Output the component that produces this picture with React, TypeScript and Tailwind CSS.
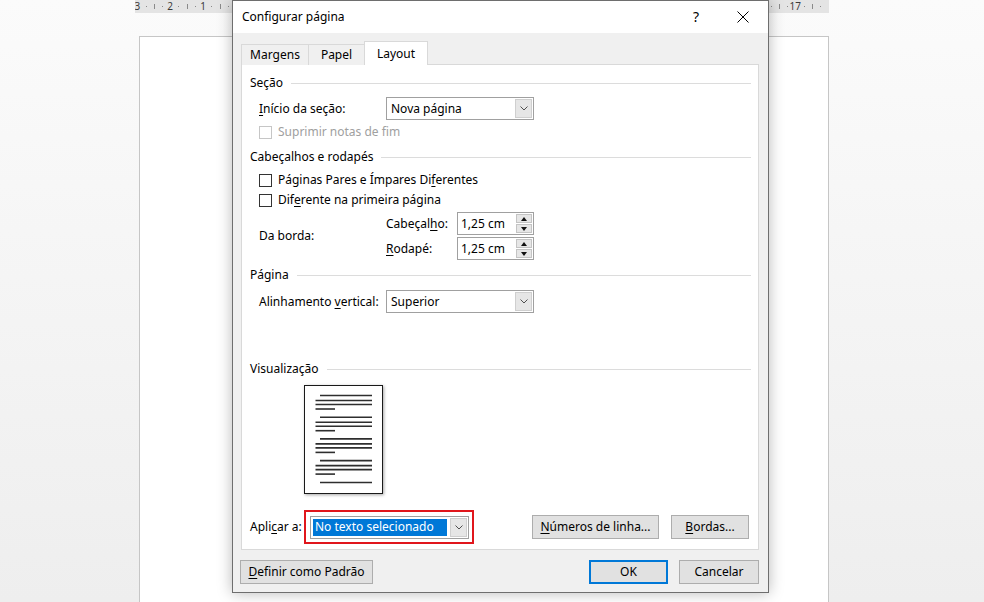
import React from "react";

const U = ({ children }: { children: React.ReactNode }) => (
  <span className="underline decoration-1 underline-offset-[2px]">{children}</span>
);

function Chevron() {
  return (
    <svg width="8" height="5" viewBox="0 0 8 5">
      <path d="M0.5 0.5 L4 4 L7.5 0.5" fill="none" stroke="#505050" strokeWidth="1" />
    </svg>
  );
}

function SelectBox({ children, className }: { children: React.ReactNode; className: string }) {
  return (
    <div className={`flex h-[23px] items-stretch border border-[#a0a0a0] bg-white ${className}`}>
      <div className="flex flex-1 items-center overflow-hidden">{children}</div>
      <div className="m-px flex w-[17px] items-center justify-center border border-[#cfcfcf] bg-[#e6e6e6]">
        <Chevron />
      </div>
    </div>
  );
}

function Spinner({ value }: { value: string }) {
  return (
    <div className="flex h-[23px] w-[77px] items-stretch border border-[#a0a0a0] bg-white">
      <div className="flex flex-1 items-center pl-[3px]">{value}</div>
      <div className="my-px mr-px flex w-[16px] flex-col gap-px">
        <div className="flex flex-1 items-center justify-center border border-[#c4c4c4] bg-[#e6e6e6]">
          <svg width="6" height="4" viewBox="0 0 6 4">
            <path d="M0 4 L3 0 L6 4 Z" fill="#111" />
          </svg>
        </div>
        <div className="flex flex-1 items-center justify-center border border-[#c4c4c4] bg-[#e6e6e6]">
          <svg width="6" height="4" viewBox="0 0 6 4">
            <path d="M0 0 L3 4 L6 0 Z" fill="#111" />
          </svg>
        </div>
      </div>
    </div>
  );
}

function Header({ label, className = "" }: { label: string; className?: string }) {
  return (
    <div className={`flex h-[16px] items-center ${className}`}>
      <span>{label}</span>
      <div className="ml-[8px] h-px flex-1 bg-[#dcdcdc]" />
    </div>
  );
}

function Checkbox({ disabled }: { disabled?: boolean }) {
  return (
    <div
      className={`h-[13px] w-[13px] shrink-0 border bg-white ${
        disabled ? "border-[#c6c6c6]" : "border-[#333333]"
      }`}
    />
  );
}

function Btn({ children, className = "" }: { children: React.ReactNode; className?: string }) {
  return (
    <div
      className={`flex h-[24px] items-center justify-center border border-[#adadad] bg-[#e1e1e1] ${className}`}
    >
      {children}
    </div>
  );
}

function PreviewPage() {
  const groups = [0, 21.7, 43.4, 65.1];
  return (
    <div className="ml-[54px] mt-[8px] h-[109px] w-[79px] border border-[#1a1a1a] bg-white shadow-[1px_1px_3px_rgba(0,0,0,0.35)]">
      <svg width="77" height="107" viewBox="0 0 77 107">
        {groups.map((g, i) => (
          <g key={i} stroke="#2e2e2e" strokeWidth="1.6">
            <line x1="15" x2="67" y1={9.5 + g} y2={9.5 + g} />
            <line x1="10.5" x2="67" y1={14.5 + g} y2={14.5 + g} />
            <line x1="10.5" x2="67" y1={18.5 + g} y2={18.5 + g} />
            <line x1="10.5" x2="30" y1={23 + g} y2={23 + g} />
          </g>
        ))}
        <line x1="15" x2="67" y1={96.5} y2={96.5} stroke="#2e2e2e" strokeWidth="1.6" />
      </svg>
    </div>
  );
}

function Ruler() {
  const zero = 101;
  const cm = 32.9;
  const labels = new Set([-3, -2, -1, 17]);
  const items: { x: number; kind: "n" | "d" | "h"; label?: string }[] = [];
  for (let n = -4; n <= 17; n++) {
    const x = zero + n * cm;
    if (labels.has(n)) items.push({ x, kind: "n", label: String(Math.abs(n)) });
    items.push({ x: x + cm / 4, kind: "d" });
    items.push({ x: x + cm / 2, kind: "h" });
    items.push({ x: x + (3 * cm) / 4, kind: "d" });
  }
  return (
    <div className="relative ml-[135px] h-[13px] w-[694px] overflow-hidden bg-[#e4e4e4]">
      {items.map((it, i) =>
        it.kind === "n" ? (
          <span
            key={i}
            className="absolute top-[-1px] -translate-x-1/2 text-[10px] leading-[14px] text-[#3a3a3a]"
            style={{ left: it.x }}
          >
            {it.label}
          </span>
        ) : it.kind === "d" ? (
          <div key={i} className="absolute top-[6px] h-px w-px bg-[#8a8a8a]" style={{ left: it.x }} />
        ) : (
          <div key={i} className="absolute top-[4px] h-[5px] w-px bg-[#8a8a8a]" style={{ left: it.x }} />
        )
      )}
    </div>
  );
}

export default function App() {
  return (
    <div className="relative h-[602px] w-[984px] overflow-hidden bg-linear-to-b from-[#fbfbfb] to-[#eeeeee] font-['Noto_Sans',sans-serif] text-[12px] text-black">
      <div className="flex h-full flex-col">
        <Ruler />
        <div className="ml-[139px] mt-[23px] w-[690px] flex-1 border border-b-0 border-[#c6c6c6] bg-white" />
      </div>

      {/* Dialog window */}
      <div className="absolute left-[232px] top-0 flex h-[593px] w-[537px] flex-col border border-[#6e6e6e] bg-[#f0f0f0] shadow-[0_0_14px_rgba(0,0,0,0.28)]">
        <div className="flex h-[32px] shrink-0 items-center bg-white pl-[9px]">
          <span className="text-[12px]">Configurar página</span>
          <span className="ml-auto text-[14px] leading-none">?</span>
          <svg className="ml-[38px] mr-[19px]" width="12" height="12" viewBox="0 0 12 12">
            <path d="M0.5 0.5 L11.5 11.5 M11.5 0.5 L0.5 11.5" stroke="#000" strokeWidth="1" />
          </svg>
        </div>

        {/* Tabs */}
        <div className="relative z-10 ml-[8px] mt-[8px] flex h-[24px] items-end -mb-px">
          <div className="flex h-[21px] w-[67px] items-center justify-center border border-r-0 border-b-0 border-[#d9d9d9] bg-[#f0f0f0]">
            Margens
          </div>
          <div className="flex h-[21px] w-[57px] items-center justify-center border border-b-0 border-[#d9d9d9] bg-[#f0f0f0]">
            Papel
          </div>
          <div className="-ml-px flex h-[24px] w-[64px] items-start justify-center border border-b-0 border-[#d9d9d9] bg-white pt-[3px]">
            Layout
          </div>
        </div>

        {/* Panel */}
        <div className="ml-[8px] flex h-[486px] w-[518px] flex-col border border-[#d9d9d9] bg-white pl-[8px] pr-[7px] pt-[10px]">
          <Header label="Seção" />
          <div className="mt-[6px] flex h-[23px] items-center pl-[9px]">
            <span className="w-[127px]">
              <U>I</U>nício da seção:
            </span>
            <SelectBox className="w-[148px]">
              <span className="pl-[4px]">Nova página</span>
            </SelectBox>
          </div>
          <div className="mt-[2px] flex h-[20px] items-center gap-[6px] pl-[9px] text-[#a0a0a0]">
            <Checkbox disabled />
            <span>Suprimir notas de fim</span>
          </div>

          <Header label="Cabeçalhos e rodapés" className="mt-[7px]" />
          <div className="mt-[5px] flex h-[20px] items-center gap-[6px] pl-[9px]">
            <Checkbox />
            <span>
              Páginas Pares e Ímpares Di<U>f</U>erentes
            </span>
          </div>
          <div className="flex h-[20px] items-center gap-[6px] pl-[9px]">
            <Checkbox />
            <span>
              Dif<U>e</U>rente na primeira página
            </span>
          </div>
          <div className="mt-[2px] flex pl-[9px]">
            <div className="flex w-[127px] items-center">Da borda:</div>
            <div className="flex flex-col gap-[2px]">
              <div className="flex items-center">
                <span className="w-[71px]">
                  Cabeçal<U>h</U>o:
                </span>
                <Spinner value="1,25 cm" />
              </div>
              <div className="flex items-center">
                <span className="w-[71px]">
                  <U>R</U>odapé:
                </span>
                <Spinner value="1,25 cm" />
              </div>
            </div>
          </div>

          <Header label="Página" className="mt-[7px]" />
          <div className="mt-[7px] flex h-[23px] items-center pl-[9px]">
            <span className="w-[127px]">
              Alinhamento <U>v</U>ertical:
            </span>
            <SelectBox className="w-[148px]">
              <span className="pl-[4px]">Superior</span>
            </SelectBox>
          </div>

          <Header label="Visualização" className="mt-[48px]" />
          <PreviewPage />

          <div className="mt-[16px] flex h-[34px] items-center pr-[2px]">
            <span className="w-[54px]">
              Apli<U>c</U>ar a:
            </span>
            <div className="flex h-[34px] w-[170px] items-center border-2 border-[#e0161c] pl-[4px]">
              <SelectBox className="w-[159px]">
                <span className="ml-[2px] flex h-[17px] w-[134px] items-center bg-[#0078d7] pl-[2px] text-white">
                  No texto selecionado
                </span>
              </SelectBox>
            </div>
            <div className="ml-auto flex gap-[12px]">
              <Btn className="w-[127px]">
                <span>
                  <U>N</U>úmeros de linha...
                </span>
              </Btn>
              <Btn className="w-[78px]">
                <span>
                  <U>B</U>ordas...
                </span>
              </Btn>
            </div>
          </div>
        </div>

        {/* Bottom buttons */}
        <div className="mt-[10px] flex items-center pl-[7px] pr-[9px]">
          <Btn className="w-[133px]">
            <span>
              <U>D</U>efinir como Padrão
            </span>
          </Btn>
          <div className="ml-auto flex gap-[11px]">
            <div className="flex h-[24px] w-[79px] items-center justify-center border-2 border-[#0078d7] bg-[#e1e1e1]">
              OK
            </div>
            <Btn className="w-[80px]">Cancelar</Btn>
          </div>
        </div>
      </div>
    </div>
  );
}
